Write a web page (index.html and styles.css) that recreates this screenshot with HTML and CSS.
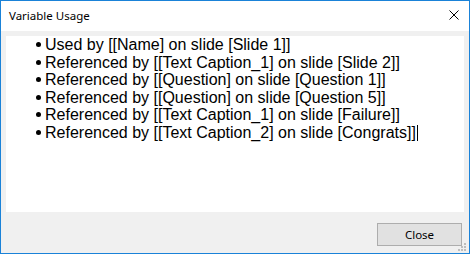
FILE: index.html
```html
<!DOCTYPE html>
<html>
<head>
<meta charset="utf-8">
<link rel="stylesheet" href="styles.css">
</head>
<body>
<div class="window">
  <div class="titlebar">
    <span class="title">Variable Usage</span>
    <svg class="close-x" width="10" height="10" viewBox="0 0 10 10">
      <path d="M0.5 0.5 L9.5 9.5 M9.5 0.5 L0.5 9.5" stroke="#000" stroke-width="1" fill="none"/>
    </svg>
  </div>
  <div class="content">
    <div class="textarea">
      <ul class="usage">
        <li><span class="dot"></span><span>Used by [[Name] on slide [Slide 1]]</span></li>
        <li><span class="dot"></span><span>Referenced by [[Text Caption_1] on slide [Slide 2]]</span></li>
        <li><span class="dot"></span><span>Referenced by [[Question] on slide [Question 1]]</span></li>
        <li><span class="dot"></span><span>Referenced by [[Question] on slide [Question 5]]</span></li>
        <li><span class="dot"></span><span>Referenced by [[Text Caption_1] on slide [Failure]]</span></li>
        <li><span class="dot"></span><span>Referenced by [[Text Caption_2] on slide [Congrats]]</span><span class="caret"></span></li>
      </ul>
    </div>
    <div class="buttons">
      <button class="btn">Close</button>
    </div>
    <div class="grip">
      <span class="g g1"></span>
      <span class="g g2"></span><span class="g g3"></span>
      <span class="g g4"></span><span class="g g5"></span><span class="g g6"></span>
    </div>
  </div>
</div>
</body>
</html>
```

FILE: styles.css
```css
html, body {
  margin: 0;
  padding: 0;
  background: #ffffff;
}

.window {
  width: 470px;
  height: 254px;
  box-sizing: border-box;
  border: 1px solid #1a82d8;
  display: flex;
  flex-direction: column;
  background: #f0f0f0;
}

.titlebar {
  height: 30px;
  flex: none;
  background: #ffffff;
  display: flex;
  align-items: center;
  padding-left: 8px;
  font-family: "Noto Sans", "Liberation Sans", sans-serif;
  font-size: 11.5px;
  color: #000;
}

.title {
  margin-top: -1px;
}

.close-x {
  margin-left: auto;
  margin-right: 10px;
  margin-bottom: 2px;
  display: block;
}

.content {
  flex: 1;
  position: relative;
  display: flex;
  flex-direction: column;
  padding: 5px 5px 7px 5px;
}

.textarea {
  height: 176px;
  flex: none;
  background: #ffffff;
  padding-top: 0;
  box-sizing: border-box;
}

.usage {
  list-style: none;
  margin: 0;
  padding: 0 0 0 30px;
  font-family: "Liberation Sans", Arial, sans-serif;
  font-size: 16px;
  line-height: 17.6px;
  color: #000;
}

.usage li {
  display: flex;
  align-items: flex-start;
  white-space: nowrap;
}

.dot {
  width: 5px;
  height: 5px;
  border-radius: 50%;
  background: #000;
  margin-top: 6px;
  margin-right: 4px;
  flex: none;
}

.caret {
  width: 1px;
  height: 16px;
  background: #000;
  margin-left: 1px;
  margin-top: 1px;
  flex: none;
}

.buttons {
  display: flex;
  justify-content: flex-end;
  margin-top: 11px;
  padding-right: 2px;
}

.btn {
  width: 85px;
  height: 23px;
  box-sizing: border-box;
  border: 1px solid #adadad;
  background: #e1e1e1;
  font-family: "Noto Sans", "Liberation Sans", sans-serif;
  font-size: 11.5px;
  color: #000;
  padding: 0;
  margin: 0;
}

.grip {
  position: absolute;
  right: 3px;
  bottom: 2px;
  width: 8px;
  height: 8px;
}

.g {
  position: absolute;
  width: 2px;
  height: 2px;
  background: #bdbdbd;
}
.g1 { right: 0; top: 0; }
.g2 { right: 3px; top: 3px; }
.g3 { right: 0; top: 3px; }
.g4 { right: 6px; top: 6px; }
.g5 { right: 3px; top: 6px; }
.g6 { right: 0; top: 6px; }
```
